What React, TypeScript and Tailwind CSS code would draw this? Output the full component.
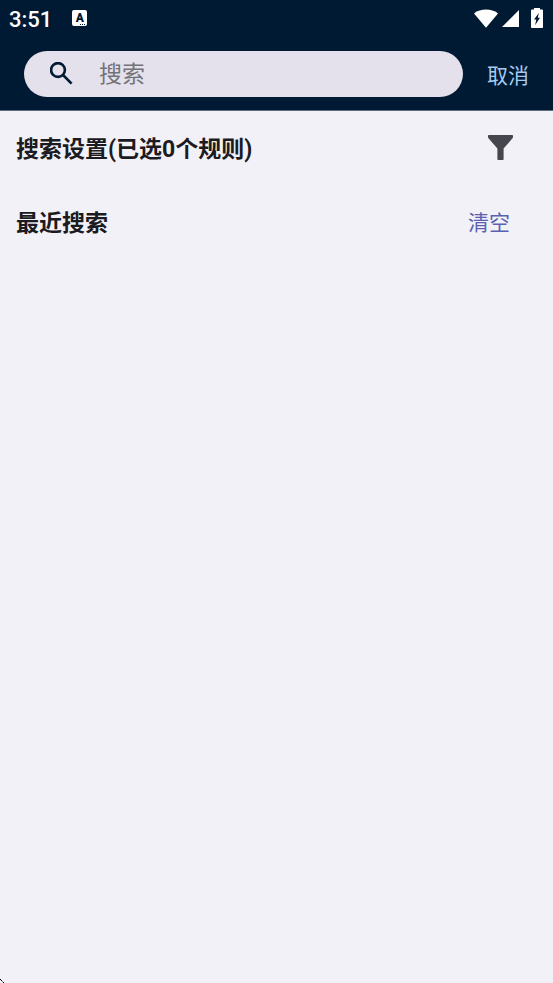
import { useState } from 'react';

function StatusBar() {
  return (
    <div className="flex h-9 items-center justify-between pl-[9px] pr-2.5 text-white">
      <div className="flex items-center gap-5">
        <span className="mt-1 text-[22px] font-medium leading-7">3:51</span>
        <span className="relative flex h-4 w-[15px] items-center justify-center rounded-xs bg-white text-xs font-black leading-none text-[#001a33]">
          A
          <svg viewBox="0 0 6 1" className="absolute bottom-px right-px h-px w-1.5" fill="#001a33" aria-hidden="true">
            <path d="M0 0h1v1H0zM2 0h1v1H2zM4 0h1v1H4z" />
          </svg>
        </span>
      </div>
      <div className="flex items-center" aria-hidden="true">
        <svg viewBox="0 0 24 19" className="h-[19px] w-6" fill="currentColor">
          <path d="M12 18.8 0 4.4C3.4 1.6 7.6.5 12 .5s8.600 1.100 12 3.900z" />
        </svg>
        <svg viewBox="0 0 17 17" className="ml-1 h-[17px] w-[17px]" fill="currentColor">
          <path d="M17 0v17H0z" />
        </svg>
        <svg viewBox="0 0 12 20" className="ml-3 h-5 w-3" fill="currentColor">
          <path
            fillRule="evenodd"
            d="M3 0h6v1.500h2.200c.5 0 .8.300.8.800v16.900c0 .5-.3.800-.8.800H.8c-.5 0-.8-.3-.8-.8V2.300C0 1.800.3 1.500.8 1.500H3zM7.800 5 3 11.500h2.300l-1.200 5.700 4.900-7.400H6.800z"
          />
        </svg>
      </div>
    </div>
  );
}

function SearchIcon() {
  return (
    <svg viewBox="0 0 24 24" className="h-6 w-6 shrink-0" fill="none" stroke="#001a33" strokeWidth="2.600" aria-hidden="true">
      <circle cx="8" cy="8" r="6.900" />
      <path d="m13 13 8.600 8.600" />
    </svg>
  );
}

function FilterIcon() {
  return (
    <svg viewBox="0 0 25 25" className="h-[25px] w-[25px]" fill="#46464f" aria-hidden="true">
      <path d="M1 0h23c.6 0 1 .4 1 1v1c0 .5-.2.900-.5 1.300L15.600 13.600V24c0 .6-.4 1-1 1h-4.200c-.6 0-1-.4-1-1V13.600L.5 3.300C.2 2.900 0 2.500 0 2V1c0-.6.4-1 1-1z" />
    </svg>
  );
}

export default function App() {
  const [query, setQuery] = useState('');

  return (
    <div className="relative flex min-h-screen flex-col bg-[#f3f1f8] font-[Roboto,'Noto_Sans_CJK_SC',sans-serif] text-[#1b1b21]">
      <header className="border-b border-[#5f6980] bg-[#001a33]">
        <StatusBar />
        <div className="flex items-center px-6 pb-[13px] pt-[15px]">
          <label className="flex h-[46px] min-w-0 flex-1 items-center gap-[25px] rounded-full bg-[#e4e1ec] pl-[26px] pr-6">
            <SearchIcon />
            <input
              type="text"
              aria-label="搜索"
              placeholder="搜索"
              value={query}
              onChange={(e) => setQuery(e.target.value)}
              className="min-w-0 flex-1 bg-transparent pt-0.5 text-[23px] leading-8 outline-none placeholder:text-[#737278]"
            />
          </label>
          <button type="button" className="ml-6 pt-1 text-[21px] leading-8 text-[#a5cbf0]" onClick={() => setQuery('')}>
            取消
          </button>
        </div>
      </header>

      <main className="flex-1 pl-4">
        <section className="flex h-[73px] items-center justify-between pr-10">
          <h2 className="pt-1 text-[23px] font-bold leading-8">搜索设置(已选0个规则)</h2>
          <button type="button" aria-label="筛选">
            <FilterIcon />
          </button>
        </section>
        <section className="flex h-[75px] items-center justify-between pr-[43px]">
          <h2 className="pt-1 text-[23px] font-bold leading-8">最近搜索</h2>
          <button type="button" className="pt-0.5 text-[21px] leading-8 text-[#5a61b0]">
            清空
          </button>
        </section>
      </main>

      <svg viewBox="0 0 4 4" className="absolute bottom-0 left-0 h-1 w-1" fill="#000" aria-hidden="true">
        <path d="M0 0h1v1H0zM1 1h1v1H1zM3 3h1v1H3z" />
        <path fill="#777" d="M2 2h1v1H2z" />
      </svg>
    </div>
  );
}
